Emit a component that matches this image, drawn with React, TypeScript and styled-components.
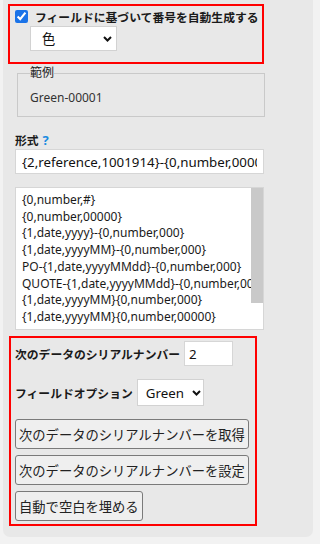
import React, { useState } from "react";
import styled, { createGlobalStyle } from "styled-components";

const GlobalStyle = createGlobalStyle`
  html, body {
    margin: 0;
    padding: 0;
    background: #f2f2f2;
  }
  body {
    padding: 0 0 7px;
    font-family: "Noto Sans", "Noto Sans CJK JP", sans-serif;
    color: #1a1a1a;
  }
  * {
    box-sizing: border-box;
  }
`;

const Panel = styled.div`
  width: 310px;
  margin-left: 3px;
  padding: 4px 0 11px;
  background: #e8e8e8;
  border-radius: 0 0 7px 7px;
`;

const Highlight = styled.div<{ $left: number; $width: number }>`
  margin-left: ${(p) => p.$left}px;
  width: ${(p) => p.$width}px;
  border: 2px solid #ff0000;
`;

const TopBox = styled(Highlight)`
  height: 60px;
  padding: 0 0 0 5px;
`;

const CheckRow = styled.label`
  display: flex;
  align-items: center;
  height: 20px;
  font-size: 11.8px;
  font-weight: 700;
  white-space: nowrap;
`;

const CheckBox = styled.input`
  width: 13px;
  height: 13px;
  margin: 0 7px 0 0;
  accent-color: #1a73e8;
`;

const SelectWrap = styled.div<{ $width: number; $height: number }>`
  position: relative;
  flex: none;
  width: ${(p) => p.$width}px;
  height: ${(p) => p.$height}px;
`;

const Select = styled.select<{ $pad: number }>`
  appearance: none;
  display: block;
  width: 100%;
  height: 100%;
  margin: 0;
  padding: 0 0 0 ${(p) => p.$pad}px;
  background: #ffffff;
  border: 1px solid #d2d2d2;
  border-radius: 0;
  font-family: "Noto Sans", "Noto Sans CJK JP", sans-serif;
  font-size: 13.3px;
  font-weight: 400;
  color: #111;
`;

const Chevron = styled.svg<{ $right: number }>`
  position: absolute;
  top: 50%;
  right: ${(p) => p.$right}px;
  width: 9px;
  height: 6px;
  margin-top: -3px;
  pointer-events: none;
`;

const ColorSelect = styled(SelectWrap)`
  margin-left: 15px;
`;

const Example = styled.fieldset`
  width: 248px;
  margin: 1px 0 0 14px;
  padding: 9px 12px 10px;
  border: 1px solid #c9c9c9;
  font-size: 12px;
  color: #333;
`;

const Legend = styled.legend`
  padding: 0;
  font-size: 12px;
  line-height: 16px;
  color: #222;
`;

const ExampleValue = styled.div`
  line-height: 16px;
`;

const Section = styled.div`
  margin: 15px 0 0 12px;
  width: 249px;
`;

const FieldLabel = styled.div`
  font-size: 11.8px;
  font-weight: 700;
  line-height: 16px;
`;

const Help = styled.span`
  margin-left: 4px;
  color: #1a8be0;
  font-size: 13px;
`;

const TextInput = styled.input<{ $width?: number; $pad: number }>`
  display: block;
  flex: none;
  width: ${(p) => (p.$width ? `${p.$width}px` : "100%")};
  height: 25px;
  margin: 0;
  padding: 0 ${(p) => p.$pad}px;
  background: #ffffff;
  border: 1px solid #d6d6d6;
  border-radius: 0;
  font-family: "Noto Sans", "Noto Sans CJK JP", sans-serif;
  font-size: 13.3px;
  font-weight: 400;
  color: #111;
  outline: none;
`;

const FormatInput = styled(TextInput)`
  margin-top: 1px;
`;

const ListBox = styled.div`
  display: flex;
  align-items: flex-start;
  height: 143px;
  margin-top: 13px;
  background: #ffffff;
  border: 1px solid #d6d6d6;
  overflow: hidden;
`;

const ListItems = styled.div`
  flex: 1;
  min-width: 0;
  padding: 4px 0 0 6px;
  overflow: hidden;
  font-size: 12px;
  line-height: 16.7px;
`;

const ListItem = styled.div`
  white-space: nowrap;
`;

const ScrollTrack = styled.div`
  flex: none;
  width: 12px;
  background: #ffffff;
`;

const ScrollThumb = styled.div`
  height: 115px;
  background: #c9c9c9;
`;

const BottomBox = styled(Highlight)`
  margin-top: 6px;
  padding: 3px 0 3px 4px;
  display: flex;
  flex-direction: column;
  align-items: flex-start;
`;

const OptionRow = styled.div<{ $top: number }>`
  display: flex;
  align-items: center;
  gap: 4px;
  margin-top: ${(p) => p.$top}px;
  font-size: 11.8px;
  font-weight: 700;
  white-space: nowrap;
`;

const ActionButton = styled.button<{ $top: number }>`
  height: 30px;
  margin: ${(p) => p.$top}px 0 0;
  padding: 0 3px;
  background: #efefef;
  border: 1px solid #7a7a7a;
  border-radius: 3px;
  font-family: "Noto Sans", "Noto Sans CJK JP", sans-serif;
  font-size: 13.3px;
  color: #222;
  white-space: nowrap;
`;

const ChevronIcon = ({ right }: { right: number }) => (
  <Chevron $right={right} viewBox="0 0 9 6">
    <polyline points="1,1 4.5,4.5 8,1" fill="none" stroke="#111" strokeWidth="2" />
  </Chevron>
);

const formats = [
  "{0,number,#}",
  "{0,number,00000}",
  "{1,date,yyyy}-{0,number,000}",
  "{1,date,yyyyMM}-{0,number,000}",
  "PO-{1,date,yyyyMMdd}-{0,number,000}",
  "QUOTE-{1,date,yyyyMMdd}-{0,number,000}",
  "{1,date,yyyyMM}{0,number,000}",
  "{1,date,yyyyMM}{0,number,00000}",
];

const App = () => {
  const [auto, setAuto] = useState(true);
  const [format, setFormat] = useState("{2,reference,1001914}-{0,number,00000}");
  const [serial, setSerial] = useState("2");

  return (
    <>
      <GlobalStyle />
      <Panel>
        <TopBox $left={5} $width={256}>
          <CheckRow>
            <CheckBox type="checkbox" checked={auto} onChange={(e) => setAuto(e.target.checked)} />
            フィールドに基づいて番号を自動生成する
          </CheckRow>
          <ColorSelect $width={87} $height={25}>
            <Select $pad={11} defaultValue="color">
              <option value="color">色</option>
            </Select>
            <ChevronIcon right={5} />
          </ColorSelect>
        </TopBox>

        <Example>
          <Legend>範例</Legend>
          <ExampleValue>Green-00001</ExampleValue>
        </Example>

        <Section>
          <FieldLabel>
            形式<Help>?</Help>
          </FieldLabel>
          <FormatInput $pad={6} value={format} onChange={(e) => setFormat(e.target.value)} />
          <ListBox>
            <ListItems>
              {formats.map((f) => (
                <ListItem key={f}>{f}</ListItem>
              ))}
            </ListItems>
            <ScrollTrack>
              <ScrollThumb />
            </ScrollTrack>
          </ListBox>
        </Section>

        <BottomBox $left={6} $width={248}>
          <OptionRow $top={0}>
            次のデータのシリアルナンバー
            <TextInput $width={49} $pad={4} value={serial} onChange={(e) => setSerial(e.target.value)} />
          </OptionRow>
          <OptionRow $top={13}>
            フィールドオプション
            <SelectWrap $width={67} $height={27}>
              <Select $pad={8} defaultValue="green">
                <option value="green">Green</option>
              </Select>
              <ChevronIcon right={3} />
            </SelectWrap>
          </OptionRow>
          <ActionButton $top={13}>次のデータのシリアルナンバーを取得</ActionButton>
          <ActionButton $top={6}>次のデータのシリアルナンバーを設定</ActionButton>
          <ActionButton $top={6}>自動で空白を埋める</ActionButton>
        </BottomBox>
      </Panel>
    </>
  );
};

export default App;
